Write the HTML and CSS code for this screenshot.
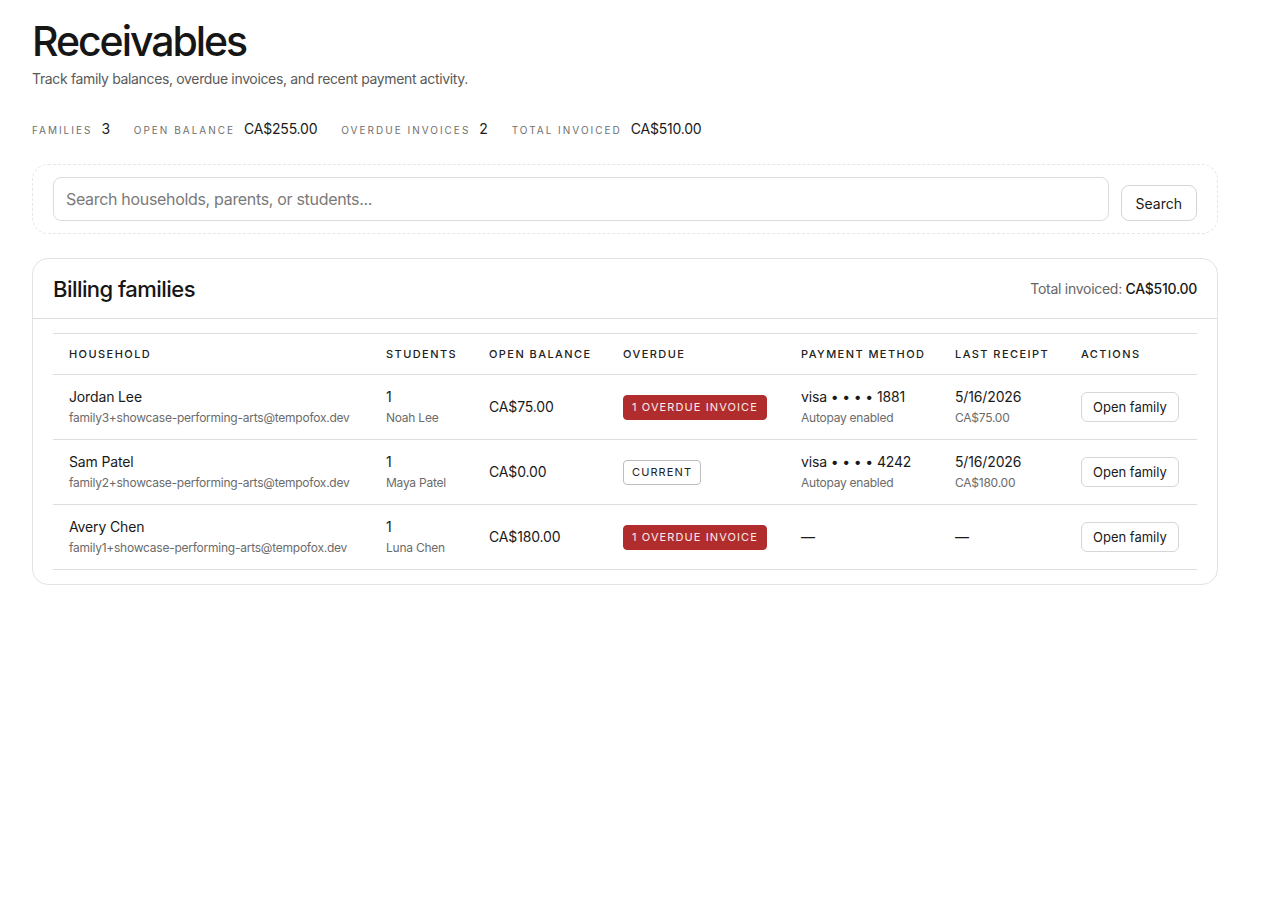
FILE: index.html
```html
<!DOCTYPE html>
<html lang="en">
<head>
<meta charset="utf-8">
<title>Receivables</title>
<link rel="stylesheet" href="styles.css">
</head>
<body>
<main class="page">
  <header class="page-head">
    <h1 class="title">Receivables</h1>
    <p class="subtitle">Track family balances, overdue invoices, and recent payment activity.</p>
  </header>

  <div class="stats">
    <div class="stat"><span class="stat-label">Families</span><span class="stat-value">3</span></div>
    <div class="stat"><span class="stat-label">Open balance</span><span class="stat-value">CA$255.00</span></div>
    <div class="stat"><span class="stat-label">Overdue invoices</span><span class="stat-value">2</span></div>
    <div class="stat"><span class="stat-label">Total invoiced</span><span class="stat-value">CA$510.00</span></div>
  </div>

  <form class="search-card">
    <input class="search-input" type="text" placeholder="Search households, parents, or students...">
    <button class="btn btn-search" type="button">Search</button>
  </form>

  <section class="card">
    <div class="card-head">
      <h2 class="card-title">Billing families</h2>
      <div class="card-total">Total invoiced: <strong>CA$510.00</strong></div>
    </div>
    <div class="table-wrap">
      <table class="table">
        <colgroup>
          <col class="c-household"><col class="c-students"><col class="c-balance"><col class="c-overdue"><col class="c-method"><col class="c-receipt"><col class="c-actions">
        </colgroup>
        <thead>
          <tr>
            <th>Household</th><th>Students</th><th>Open balance</th><th>Overdue</th><th>Payment method</th><th>Last receipt</th><th>Actions</th>
          </tr>
        </thead>
        <tbody>
          <tr>
            <td><div class="main">Jordan Lee</div><div class="sub">family3+showcase-performing-arts@tempofox.dev</div></td>
            <td><div class="main">1</div><div class="sub">Noah Lee</div></td>
            <td><div class="main">CA$75.00</div></td>
            <td><span class="badge badge-danger">1 overdue invoice</span></td>
            <td><div class="main">visa • • • • 1881</div><div class="sub">Autopay enabled</div></td>
            <td><div class="main">5/16/2026</div><div class="sub">CA$75.00</div></td>
            <td><button class="btn btn-small" type="button">Open family</button></td>
          </tr>
          <tr>
            <td><div class="main">Sam Patel</div><div class="sub">family2+showcase-performing-arts@tempofox.dev</div></td>
            <td><div class="main">1</div><div class="sub">Maya Patel</div></td>
            <td><div class="main">CA$0.00</div></td>
            <td><span class="badge badge-outline">Current</span></td>
            <td><div class="main">visa • • • • 4242</div><div class="sub">Autopay enabled</div></td>
            <td><div class="main">5/16/2026</div><div class="sub">CA$180.00</div></td>
            <td><button class="btn btn-small" type="button">Open family</button></td>
          </tr>
          <tr>
            <td><div class="main">Avery Chen</div><div class="sub">family1+showcase-performing-arts@tempofox.dev</div></td>
            <td><div class="main">1</div><div class="sub">Luna Chen</div></td>
            <td><div class="main">CA$180.00</div></td>
            <td><span class="badge badge-danger">1 overdue invoice</span></td>
            <td><div class="main">—</div></td>
            <td><div class="main">—</div></td>
            <td><button class="btn btn-small" type="button">Open family</button></td>
          </tr>
        </tbody>
      </table>
    </div>
  </section>
</main>
</body>
</html>
```

FILE: styles.css
```css
* { box-sizing: border-box; }

html, body {
  margin: 0;
  padding: 0;
  background: #ffffff;
}

body {
  font-family: Inter, "Noto Sans", "Liberation Sans", sans-serif;
  color: #1a1a1a;
}

.page {
  width: 1186px;
  margin-left: 32px;
  padding-top: 16px;
}

.title {
  margin: 0;
  font-size: 41px;
  line-height: 50px;
  font-weight: 500;
  letter-spacing: -0.05em;
  color: #161616;
}

.subtitle {
  margin: 3px 0 0;
  font-size: 14px;
  line-height: 20px;
  color: #5a5a5a;
  letter-spacing: -0.025em;
}

.stats {
  display: flex;
  gap: 24px;
  margin-top: 31px;
  align-items: baseline;
}

.stat {
  display: flex;
  align-items: baseline;
  gap: 9px;
}

.stat-label {
  font-size: 10px;
  text-transform: uppercase;
  letter-spacing: 0.2em;
  color: #707070;
}

.stat-value {
  font-size: 14px;
  color: #1a1a1a;
  letter-spacing: -0.015em;
}

.search-card {
  margin: 27px 0 0;
  display: flex;
  align-items: center;
  gap: 12px;
  padding: 12px 20px;
  border: 1px dashed #e6e6e6;
  border-radius: 16px;
}

.search-input {
  flex: 1;
  height: 44px;
  border: 1px solid #dcdcdc;
  border-radius: 8px;
  padding: 0 12px;
  font-family: inherit;
  font-size: 16px;
  color: #1a1a1a;
  letter-spacing: -0.02em;
  background: #fff;
}

.search-input::placeholder { color: #7a7a7a; }

.btn {
  font-family: inherit;
  background: #fff;
  color: #1a1a1a;
  border: 1px solid #d6d6d6;
  cursor: pointer;
}

.btn-search {
  height: 36px;
  padding: 0 14px;
  border-radius: 8px;
  font-size: 14px;
  margin-top: 8px;
}

.card {
  margin-top: 24px;
  border: 1px solid #e3e3e3;
  border-radius: 16px;
  padding-bottom: 14px;
}

.card-head {
  display: flex;
  align-items: center;
  justify-content: space-between;
  height: 60px;
  padding: 0 20px;
  border-bottom: 1px solid #dedede;
}

.card-title {
  margin: 0;
  font-size: 22px;
  font-weight: 500;
  letter-spacing: -0.025em;
  color: #161616;
}

.card-total {
  font-size: 14px;
  color: #666;
  letter-spacing: -0.02em;
}

.card-total strong {
  font-weight: 500;
  color: #1a1a1a;
}

.table-wrap {
  padding: 14px 20px 0;
}

.table {
  width: 100%;
  border-collapse: collapse;
  table-layout: fixed;
  border-top: 1px solid #dedede;
}

.c-household { width: 317px; }
.c-students { width: 103px; }
.c-balance { width: 134px; }
.c-overdue { width: 178px; }
.c-method { width: 154px; }
.c-receipt { width: 126px; }
.c-actions { width: 132px; }

.table th {
  text-align: left;
  font-size: 11px;
  font-weight: 500;
  text-transform: uppercase;
  letter-spacing: 0.13em;
  color: #222;
  height: 41px;
  padding: 0 16px;
  border-bottom: 1px solid #dedede;
  white-space: nowrap;
}

.table td {
  height: 65px;
  padding: 0 16px;
  border-bottom: 1px solid #dedede;
  vertical-align: middle;
}

.main {
  font-size: 14px;
  line-height: 20px;
  color: #1a1a1a;
  letter-spacing: -0.01em;
  white-space: nowrap;
}

.sub {
  font-size: 12px;
  line-height: 18px;
  margin-top: 2px;
  color: #6b6b6b;
  letter-spacing: -0.02em;
  white-space: nowrap;
}

.badge {
  display: inline-block;
  font-size: 11px;
  line-height: 23px;
  height: 25px;
  padding: 0 8px;
  text-transform: uppercase;
  letter-spacing: 0.1em;
  border-radius: 4px;
  white-space: nowrap;
}

.badge-danger {
  background: #b12d2d;
  color: #fbeaea;
  border: 1px solid #b12d2d;
}

.badge-outline {
  background: #fff;
  color: #222;
  border: 1px solid #bdbdbd;
}

.btn-small {
  height: 30px;
  padding: 0 11px;
  border-radius: 6px;
  font-size: 13px;
  white-space: nowrap;
}
```
